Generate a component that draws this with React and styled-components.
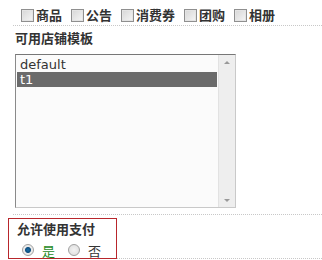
import React from "react";
import styled, { createGlobalStyle } from "styled-components";

const Global = createGlobalStyle`
  body {
    margin: 0;
    background: #fff;
    font-family: "Noto Sans CJK SC", "DejaVu Sans", sans-serif;
    color: #333;
  }
`;

const Page = styled.div`
  width: 322px;
  padding-left: 13px;
  box-sizing: border-box;
`;

const Row = styled.div`
  border-bottom: 1px dotted #c8c8c8;
  padding: ${(p) => p.pad || "0"};
`;

const Checks = styled.div`
  display: flex;
  align-items: center;
  gap: 9px;
  padding-left: 8px;
  height: 18px;
`;

const CheckItem = styled.label`
  display: flex;
  align-items: center;
  gap: 2px;
  font-size: 13px;
  font-weight: 700;
  line-height: 18px;
`;

const Box = styled.span`
  width: 11px;
  height: 11px;
  border: 1px solid #8f8f8f;
  background: linear-gradient(135deg, #d6d6d6, #f6f6f6);
  box-shadow: inset 0 0 0 1px #e4e4e4;
`;

const Label = styled.div`
  font-size: 13px;
  font-weight: 700;
  line-height: 18px;
  padding-left: 2px;
`;

const ListBox = styled.div`
  display: flex;
  width: 221px;
  height: 154px;
  margin: 7px 0 0 2px;
  box-sizing: border-box;
  border: 1px solid #c9c9c9;
  border-top-color: #777;
  border-left-color: #8a8a8a;
  background: #fbfbfb;
`;

const Options = styled.div`
  flex: 1;
  padding: 2px 1px 0 1px;
  font-family: "DejaVu Sans", sans-serif;
  font-size: 13px;
  line-height: 15px;
`;

const Option = styled.div`
  padding-left: 3px;
  color: ${(p) => (p.selected ? "#fff" : "#333")};
  background: ${(p) => (p.selected ? "#6b6b6b" : "transparent")};
`;

const Scroll = styled.div`
  width: 16px;
  display: flex;
  flex-direction: column;
  justify-content: space-between;
  align-items: center;
  padding: 6px 0 5px;
  background: #eee;
  border-left: 1px solid #e2e2e2;
`;

const Arrow = styled.span`
  width: 0;
  height: 0;
  border-left: 3px solid transparent;
  border-right: 3px solid transparent;
  ${(p) => (p.down ? "border-top: 3px solid #999;" : "border-bottom: 3px solid #999;")}
`;

const PayBox = styled.div`
  width: 109px;
  height: 41px;
  box-sizing: border-box;
  margin: 3px 0 -1px -5px;
  padding: 1px 0 0 6px;
  border: 1px solid #b8262c;
  background: #fff;
  position: relative;
`;

const Radios = styled.div`
  display: flex;
  align-items: center;
  height: 20px;
  margin-top: 2px;
  padding-left: 7px;
`;

const RadioItem = styled.label`
  display: flex;
  align-items: center;
  gap: 8px;
  margin-right: 13px;
  font-size: 13px;
  color: ${(p) => p.color || "#333"};
`;

const Dot = styled.span`
  width: 10px;
  height: 10px;
  border-radius: 50%;
  border: 1px solid #a0a0a0;
  background: ${(p) =>
    p.on
      ? "radial-gradient(circle, #1a6ea8 0, #0f4f80 2.5px, #e9e9e9 3.5px, #f4f4f4 100%)"
      : "radial-gradient(circle, #f2f2f2 0, #dcdcdc 100%)"};
`;

const cats = ["商品", "公告", "消费券", "团购", "相册"];

export default function App() {
  return (
    <Page>
      <Global />
      <Row pad="6px 0 1px">
        <Checks>
          {cats.map((c) => (
            <CheckItem key={c}>
              <Box />
              {c}
            </CheckItem>
          ))}
        </Checks>
      </Row>
      <Row pad="3px 0 6px">
        <Label>可用店铺模板</Label>
        <ListBox>
          <Options>
            <Option>default</Option>
            <Option selected>t1</Option>
          </Options>
          <Scroll>
            <Arrow />
            <Arrow down />
          </Scroll>
        </ListBox>
      </Row>
      <Row>
        <PayBox>
          <Label>允许使用支付</Label>
          <Radios>
            <RadioItem color="#1e8a1e">
              <Dot on />是
            </RadioItem>
            <RadioItem>
              <Dot />否
            </RadioItem>
          </Radios>
        </PayBox>
      </Row>
    </Page>
  );
}
